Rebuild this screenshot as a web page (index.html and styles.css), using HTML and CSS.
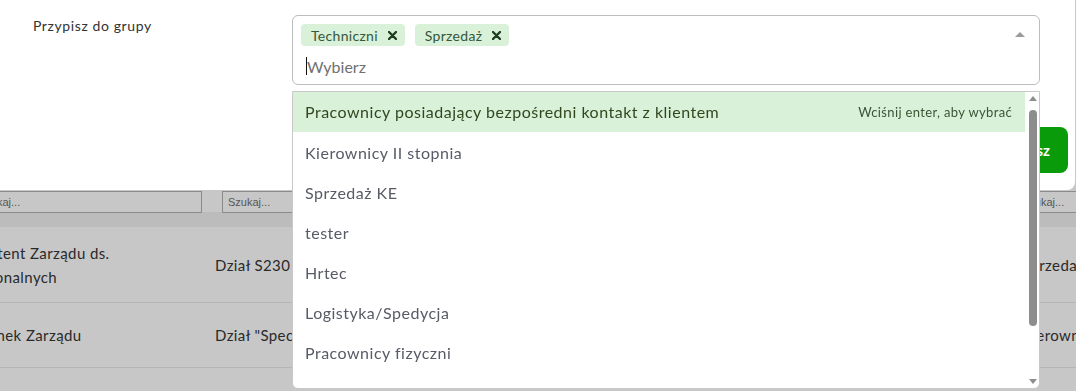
FILE: index.html
```html
<!DOCTYPE html>
<html lang="pl">
  <head>
    <meta charset="UTF-8" />
    <title>Przypisz do grupy</title>
    <link rel="stylesheet" href="styles.css">
  </head>
  <body>
    <!-- Page behind the modal -->
    <div class="page">
      <div class="grid-table">
        <div class="t-row search-row">
          <div class="t-cell"><input type="text" placeholder="Szukaj..."></div>
          <div class="t-cell"><input type="text" placeholder="Szukaj..."></div>
          <div class="t-cell"><input type="text" placeholder="Szukaj..."></div>
          <div class="t-cell last"><input type="text" placeholder="Szukaj..."></div>
        </div>
        <div class="t-row head-row"></div>
        <div class="t-row body-row tall">
          <div class="t-cell col-first">Asystent Zarządu ds.<br>Regionalnych</div>
          <div class="t-cell">Dział S230</div>
          <div class="t-cell">Sprzedaż</div>
          <div class="t-cell">Sprzedaż</div>
        </div>
        <div class="t-row body-row">
          <div class="t-cell col-first">Członek Zarządu</div>
          <div class="t-cell">Dział "Specjalny"</div>
          <div class="t-cell">Kierownicy</div>
          <div class="t-cell">Kierownicy</div>
        </div>
        <div class="t-row body-row"></div>
      </div>
    </div>

    <!-- Modal overlay -->
    <div class="overlay">
      <div class="modal">
        <div class="form-row">
          <div class="form-label">Przypisz do grupy</div>
          <div class="form-field">
            <div class="multiselect">
              <div class="tags">
                <span class="tag">Techniczni
                  <svg class="tag-x" width="9" height="9" viewBox="0 0 9 9"><path d="M1 1 L8 8 M8 1 L1 8" stroke="#1f3d1f" stroke-width="2.4" stroke-linecap="round"/></svg>
                </span>
                <span class="tag">Sprzedaż
                  <svg class="tag-x" width="9" height="9" viewBox="0 0 9 9"><path d="M1 1 L8 8 M8 1 L1 8" stroke="#1f3d1f" stroke-width="2.4" stroke-linecap="round"/></svg>
                </span>
              </div>
              <div class="search-line"><span class="cursor"></span><span class="placeholder">Wybierz</span></div>
              <span class="select-caret"></span>
            </div>

            <!-- Dropdown with options -->
            <div class="dropdown">
              <ul class="options">
                <li class="option active">
                  <span>Pracownicy posiadający bezpośredni kontakt z klientem</span>
                  <span class="hint">Wciśnij enter, aby wybrać</span>
                </li>
                <li class="option">Kierownicy II stopnia</li>
                <li class="option">Sprzedaż KE</li>
                <li class="option">tester</li>
                <li class="option">Hrtec</li>
                <li class="option">Logistyka/Spedycja</li>
                <li class="option">Pracownicy fizyczni</li>
                <li class="option">testUser</li>
              </ul>
              <div class="scrollbar">
                <span class="arrow-up"></span>
                <span class="thumb"></span>
                <span class="arrow-down"></span>
              </div>
            </div>
          </div>
        </div>
        <div class="actions">
          <button type="button" class="save-button">Zapisz</button>
        </div>
      </div>
    </div>
  </body>
</html>
```

FILE: styles.css
```css
html {
  height: 100%;
}
body {
  margin: 0;
  padding: 0;
  background: #fff;
  font-family: Lato, "Noto Sans", sans-serif;
  color: #333;
  overflow: hidden;
}

/* Page behind the modal */
.page {
  padding-top: 190px;
}

.grid-table {
  margin-left: -43px;
}

.t-row {
  display: grid;
  grid-template-columns: 250px 300px 507px 150px;
}

.search-row {
  height: 22px;
}

.search-row .t-cell {
  padding: 0 5px 0 15px;
}

.search-row .t-cell.last {
  padding-left: 2px;
}

.search-row input {
  box-sizing: border-box;
  width: 100%;
  height: 22px;
  margin: 0;
  border: 1px solid #b3b3b3;
  background: #fff;
  font-family: "Liberation Sans", Arial, sans-serif;
  font-size: 11px;
  padding: 0 5px;
}

.search-row input::placeholder {
  color: #707070;
}

.head-row {
  height: 15px;
  background: #f1f1f1;
}

.body-row {
  height: 64px;
  border-bottom: 1px solid #e8e8e8;
  font-size: 15px;
  letter-spacing: 0.4px;
  line-height: 24px;
  color: #363636;
}

.body-row.tall {
  height: 75px;
}

.body-row .t-cell {
  display: flex;
  align-items: center;
  padding: 0 8px;
}

/* Grey overlay */
.overlay {
  position: fixed;
  top: 0;
  left: 0;
  right: 0;
  bottom: 0;
  background: rgba(0, 0, 0, 0.22);
}

.modal {
  width: 1075px;
  height: 190px;
  box-sizing: border-box;
  padding: 15px 7px 0 33px;
  background: #fff;
  border-radius: 0 0 8px 0;
}

.form-row {
  display: flex;
}

.form-label {
  width: 259px;
  padding-top: 2px;
  font-size: 14px;
  letter-spacing: 0.6px;
  color: #333;
}

.form-field {
  width: 748px;
  position: relative;
}

/* Multiselect box */
.multiselect {
  position: relative;
  height: 70px;
  box-sizing: border-box;
  border: 1px solid #bdbdbd;
  border-radius: 6px;
  padding: 8px 8px 0 8px;
}

.tags {
  display: flex;
  gap: 10px;
}

.tag {
  display: inline-flex;
  align-items: center;
  gap: 10px;
  height: 22px;
  padding: 0 8px 0 10px;
  background: #d9f0d9;
  border-radius: 4px;
  font-size: 14px;
  letter-spacing: 0.3px;
  color: #35573a;
}

.search-line {
  display: flex;
  align-items: center;
  height: 24px;
  margin-top: 8px;
  padding-left: 5px;
}

.cursor {
  width: 1px;
  height: 18px;
  background: #111;
}

.placeholder {
  font-size: 16px;
  color: #707070;
}

.select-caret {
  position: absolute;
  top: 16px;
  right: 14px;
  width: 0;
  height: 0;
  border-left: 5px solid transparent;
  border-right: 5px solid transparent;
  border-bottom: 5px solid #9a9a9a;
}

/* Dropdown list */
.dropdown {
  position: absolute;
  top: calc(100% + 6px);
  left: 0;
  width: 748px;
  height: 298px;
  box-sizing: border-box;
  display: flex;
  background: #fff;
  border: 1px solid #c9c9c9;
  border-radius: 0 0 6px 6px;
  overflow: hidden;
}

.options {
  flex: 1;
  margin: 0;
  padding: 0;
  list-style: none;
}

.option {
  display: flex;
  justify-content: space-between;
  align-items: center;
  height: 40px;
  padding: 0 13px 0 12px;
  font-size: 16px;
  letter-spacing: 0.5px;
  color: #585a66;
}

.option:first-child {
  padding-bottom: 1px;
  box-sizing: border-box;
}

.option.active {
  background: #d9f0d9;
  color: #33471f;
}

.option .hint {
  font-size: 13px;
  letter-spacing: 0.35px;
  color: #3b5435;
}

.scrollbar {
  width: 14px;
  display: flex;
  flex-direction: column;
  align-items: center;
  padding: 4px 0 4px 2px;
  box-sizing: border-box;
}

.arrow-up,
.arrow-down {
  width: 0;
  height: 0;
  border-left: 4px solid transparent;
  border-right: 4px solid transparent;
}

.arrow-up {
  border-bottom: 5px solid #8d8d8d;
}

.arrow-down {
  border-top: 5px solid #8d8d8d;
  margin-top: auto;
}

.thumb {
  width: 8px;
  height: 216px;
  margin-top: 9px;
  background: #8d8d8d;
  border-radius: 4px;
}

/* Save button */
.actions {
  display: flex;
  justify-content: flex-end;
  margin-top: 42px;
}

.save-button {
  height: 46px;
  padding: 0 18px;
  border: none;
  border-radius: 8px;
  background: #0a9b0a;
  color: #fff;
  font-family: Lato, "Noto Sans", sans-serif;
  font-size: 15px;
  font-weight: bold;
}
```
